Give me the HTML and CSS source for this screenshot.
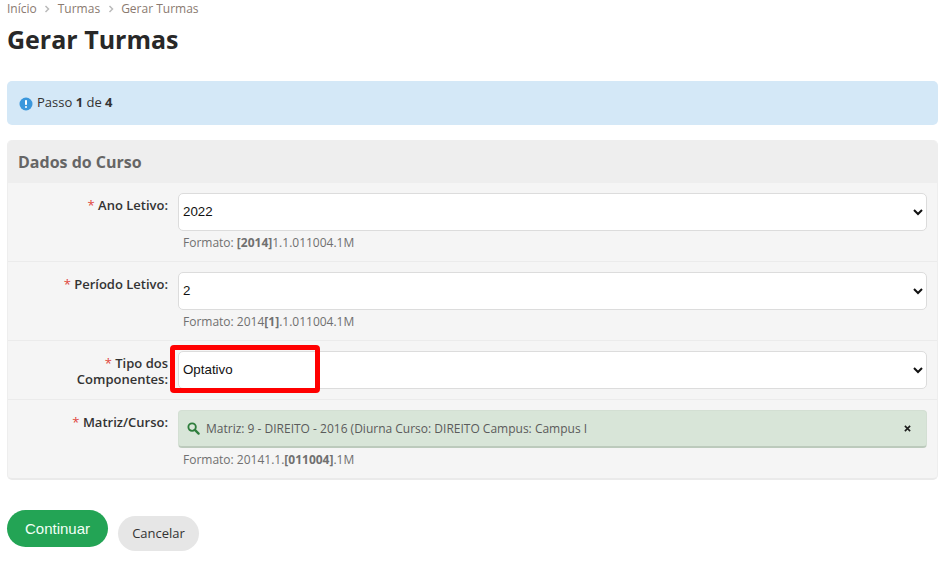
FILE: index.html
```html
<!DOCTYPE html>
<html lang="pt-BR">
<head>
<meta charset="utf-8">
<title>Gerar Turmas</title>
<link rel="stylesheet" href="styles.css">
</head>
<body>
<nav class="crumbs">
  <a>Início</a>
  <svg class="sep" viewBox="0 0 6 8" width="6" height="8"><path d="M1.5 1l3 3-3 3" fill="none" stroke="#bbb" stroke-width="1.5"/></svg>
  <a>Turmas</a>
  <svg class="sep" viewBox="0 0 6 8" width="6" height="8"><path d="M1.5 1l3 3-3 3" fill="none" stroke="#bbb" stroke-width="1.5"/></svg>
  <a>Gerar Turmas</a>
</nav>
<h1>Gerar Turmas</h1>
<div class="alert">
  <svg class="alert-icon" viewBox="0 0 14 14" width="14" height="14"><circle cx="7" cy="7" r="6.5" fill="#3a97dc"/><rect x="6" y="3" width="2" height="5" rx="0.8" fill="#fff"/><rect x="6" y="9" width="2" height="2" rx="1" fill="#fff"/></svg>
  <span>Passo <b>1</b> de <b>4</b></span>
</div>
<section class="panel">
  <h2>Dados do Curso</h2>
  <div class="row">
    <label><i>*</i> Ano Letivo:</label>
    <div class="field">
      <select><option>2022</option></select>
      <p class="hint">Formato: <b>[2014]</b>1.1.011004.1M</p>
    </div>
  </div>
  <div class="row">
    <label><i>*</i> Período Letivo:</label>
    <div class="field">
      <select><option>2</option></select>
      <p class="hint">Formato: 2014<b>[1]</b>.1.011004.1M</p>
    </div>
  </div>
  <div class="row row-short">
    <label><i>*</i> Tipo dos Componentes:</label>
    <div class="field">
      <select><option>Optativo</option></select>
      <div class="highlight"></div>
    </div>
  </div>
  <div class="row row-last">
    <label><i>*</i> Matriz/Curso:</label>
    <div class="field">
      <div class="picked">
        <svg class="search" viewBox="0 0 14 14" width="13" height="13"><circle cx="5.5" cy="5.5" r="4" fill="none" stroke="#2e7d3c" stroke-width="2"/><path d="M8.5 8.5l4 4" stroke="#2e7d3c" stroke-width="2.4" stroke-linecap="round"/></svg>
        <span class="picked-text">Matriz: 9 - DIREITO - 2016 (Diurna Curso: DIREITO Campus: Campus I</span>
        <svg class="close" viewBox="0 0 8 8" width="7" height="7"><path d="M1 1l6 6M7 1l-6 6" stroke="#1c1c1c" stroke-width="1.8"/></svg>
      </div>
      <p class="hint">Formato: 20141.1.<b>[011004]</b>.1M</p>
    </div>
  </div>
</section>
<div class="actions">
  <button class="btn-primary" type="button">Continuar</button>
  <button class="btn-secondary" type="button">Cancelar</button>
</div>
</body>
</html>
```

FILE: styles.css
```css
* { box-sizing: border-box; }
html, body { margin: 0; padding: 0; }
body {
  padding: 0 11px 0 7px;
  font-family: "Open Sans", sans-serif;
  font-size: 13px;
  color: #333;
  background: #fff;
  overflow: hidden;
}
.crumbs {
  display: flex;
  align-items: center;
  gap: 7.5px;
  height: 17px;
  font-size: 12px;
  color: #8a7a70;
}
.sep { display: block; }
h1 {
  margin: 5px 0 0;
  font-size: 25px;
  line-height: 34px;
  font-weight: 700;
  color: #282828;
}
.alert {
  display: flex;
  align-items: center;
  gap: 4px;
  height: 44px;
  margin-top: 25px;
  padding: 0 12px 2px;
  background: #d4e8f7;
  border-radius: 5px;
  color: #333;
}
.alert-icon { margin-top: 4px; }
.panel {
  margin-top: 15px;
  background: #f5f5f5;
  border-bottom: 2px solid #eaeaea;
  border-right: 1px solid #eee;
  border-left: 1px solid #eee;
  border-radius: 5px;
}
h2 {
  margin: 0;
  height: 43px;
  padding: 0 10px;
  font-size: 16px;
  line-height: 44px;
  font-weight: 700;
  color: #666;
  background: #eee;
  border-radius: 5px 5px 0 0;
}
.row {
  display: flex;
  height: 79px;
  padding-top: 10px;
  border-bottom: 1px solid #ebebeb;
}
.row-short { height: 59px; }
.row-last { height: 78px; border-bottom: 0; }
label {
  flex: none;
  width: 160px;
  padding: 4px 0 0 12px;
  text-align: right;
  font-weight: 600;
  line-height: 16px;
  color: #333;
}
label i { font-style: normal; font-weight: 400; color: #e0453c; }
.field {
  position: relative;
  flex: 1;
  margin: 0 10px;
}
select {
  display: block;
  width: 100%;
  height: 38px;
  padding: 0 0 2px;
  font-family: "Liberation Sans", sans-serif;
  font-size: 13.33px;
  color: #111;
  background: #fff;
  border: 1px solid #dcdcdc;
  border-radius: 5px;
}
.hint {
  margin: 3px 0 0 5px;
  font-size: 12px;
  line-height: 18px;
  color: #707070;
}
.highlight {
  position: absolute;
  left: -8px;
  top: -6px;
  width: 150px;
  height: 48px;
  border: 5px solid #f00;
  border-radius: 4px;
}
.picked {
  display: flex;
  align-items: center;
  height: 38px;
  padding: 0 15px 0 8px;
  background: #d8e5d8;
  border: 1px solid #d3dfd3;
  border-bottom: 2px solid #bccabc;
  border-radius: 4px;
  font-size: 12px;
  color: #5b5b5b;
}
.search { flex: none; margin-right: 6px; }
.picked-text { flex: 1; }
.close { flex: none; }
.actions {
  display: flex;
  align-items: flex-start;
  gap: 10px;
  margin-top: 30px;
}
.btn-primary {
  width: 101px;
  height: 37px;
  padding: 0;
  font-family: "Liberation Sans", sans-serif;
  font-size: 15px;
  color: #f2fff6;
  background: #23a455;
  border: 0;
  border-radius: 19px;
}
.btn-secondary {
  width: 81px;
  height: 35px;
  margin-top: 6px;
  padding: 0 0 2px;
  font-family: "Open Sans", sans-serif;
  font-size: 13px;
  color: #333;
  background: #e6e6e6;
  border: 0;
  border-radius: 18px;
}
```
